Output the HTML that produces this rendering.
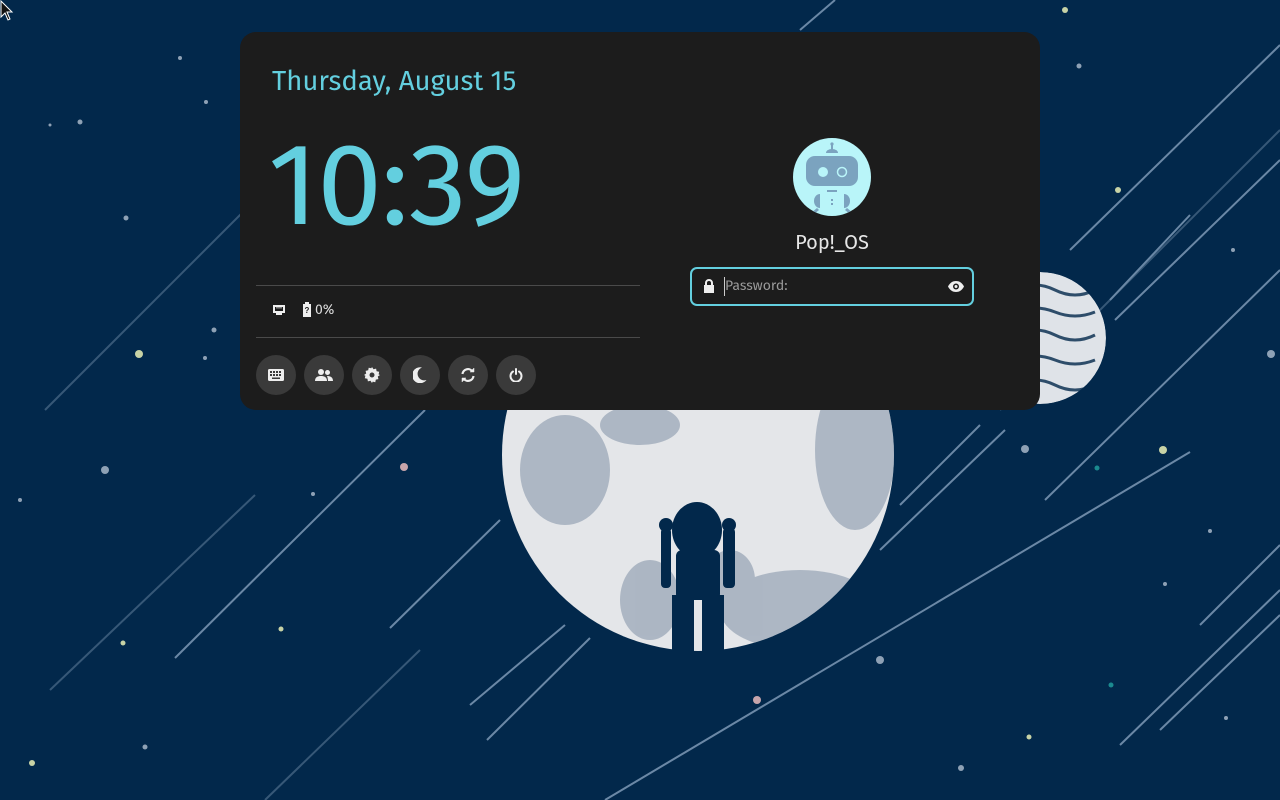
<!DOCTYPE html>
<html><head><meta charset="utf-8"><style>
html,body{margin:0;padding:0;width:1280px;height:800px;overflow:hidden;background:#02284b;font-family:"Fira Sans","Liberation Sans",sans-serif}
#bg{position:absolute;left:0;top:0}
.card{position:absolute;left:240px;top:32px;width:800px;height:378px;background:#1c1c1c;border-radius:16px}
.date{position:absolute;left:32px;top:33px;font-size:27.5px;color:#63cfdf}
.time{position:absolute;left:28px;top:96px;font-size:116px;color:#63cfdf;letter-spacing:-1px;line-height:1}
.hr{position:absolute;left:16px;width:384px;height:1px;background:#4a4a4a}
.status{position:absolute;left:32px;top:269px;color:#ddd;font-size:14px;display:flex;align-items:center}
.btns{position:absolute;left:16px;top:323px;display:flex;gap:8px}
.b{width:40px;height:40px;border-radius:20px;background:#3a3a3a;display:flex;align-items:center;justify-content:center}
.av{position:absolute;left:553px;top:106px;width:78px;height:78px;border-radius:50%;background:#b9f5f9;overflow:hidden}
.name{position:absolute;left:492px;top:199px;width:200px;text-align:center;color:#e6e6e6;font-size:20px}
.pw{position:absolute;left:450px;top:235px;width:280px;height:35px;border:2px solid #63cfdf;border-radius:7px;background:#1c1c1c}
.pw span{position:absolute;left:33px;top:8px;font-size:14px;color:#9a9a9a}
.caret{position:absolute;left:32px;top:8px;width:1px;height:19px;background:#ccc}
</style></head><body>
<svg id="bg" width="1280" height="800">
<defs><clipPath id="mc"><rect x="0" y="0" width="1280" height="651"/></clipPath>
<clipPath id="mcc"><circle cx="698" cy="455" r="196"/></clipPath>
<clipPath id="pc"><circle cx="1040" cy="338" r="66"/></clipPath></defs>
<g stroke="#8fa9c4" stroke-width="2" opacity=".75">
<line x1="800" y1="30" x2="835" y2="0"/><line x1="1000" y1="410" x2="1280" y2="130" opacity=".5"/>
<line x1="1070" y1="250" x2="1280" y2="45"/><line x1="1110" y1="300" x2="1190" y2="215"/><line x1="1115" y1="320" x2="1280" y2="160"/>
<line x1="900" y1="505" x2="980" y2="425"/><line x1="880" y1="550" x2="1005" y2="430"/><line x1="1045" y1="500" x2="1280" y2="270"/>
<line x1="605" y1="800" x2="1190" y2="452"/><line x1="1120" y1="745" x2="1280" y2="590"/><line x1="1160" y1="730" x2="1280" y2="615"/>
<line x1="1200" y1="625" x2="1280" y2="545"/><line x1="390" y1="628" x2="500" y2="520"/><line x1="175" y1="658" x2="425" y2="410"/>
<line x1="470" y1="705" x2="565" y2="625"/><line x1="487" y1="740" x2="590" y2="638"/>
<line x1="265" y1="800" x2="420" y2="650" opacity=".5"/><line x1="45" y1="410" x2="255" y2="200" opacity=".5"/>
<line x1="50" y1="690" x2="255" y2="495" opacity=".5"/>
</g>
<g clip-path="url(#pc)"><circle cx="1040" cy="338" r="66" fill="#dfe3e8"/>
<g stroke="#02284b" stroke-width="3" fill="none" opacity=".8"><path d="M975 270q20 8 40 0t40 0t40 0"/><path d="M975 290q20 10 40 0t40 0t40 0"/><path d="M975 312q20 8 40 0t40 0t40 0"/><path d="M975 335q20 10 40 0t40 0t40 0"/><path d="M975 360q20 8 40 0t40 0t40 0"/><path d="M975 385q20 10 40 0t40 0t40 0"/></g></g>
<g clip-path="url(#mc)">
<circle cx="698" cy="455" r="196" fill="#e4e6e9"/>
<g fill="#6a7e97" opacity=".45" clip-path="url(#mcc)">
<ellipse cx="565" cy="470" rx="45" ry="55"/><ellipse cx="640" cy="425" rx="40" ry="20"/><ellipse cx="855" cy="450" rx="40" ry="80"/>
<ellipse cx="800" cy="610" rx="80" ry="40"/><ellipse cx="650" cy="600" rx="30" ry="40"/><ellipse cx="730" cy="580" rx="25" ry="30"/>
</g>
<g fill="#02284b">
<ellipse cx="697" cy="530" rx="25" ry="28"/><circle cx="666" cy="525" r="7"/><circle cx="729" cy="525" r="7"/>
<rect x="661" y="528" width="10" height="60" rx="4"/><rect x="723" y="528" width="12" height="60" rx="4"/>
<rect x="676" y="550" width="44" height="50" rx="6"/><rect x="672" y="595" width="22" height="60"/><rect x="702" y="595" width="22" height="60"/>
</g></g>
<g fill="#8ea1b5">
<circle cx="105" cy="470" r="4"/><circle cx="404" cy="467" r="4" fill="#c7a5ab"/><circle cx="1025" cy="449" r="4"/><circle cx="1163" cy="450" r="4" fill="#c8d3a6"/>
<circle cx="880" cy="660" r="4"/><circle cx="757" cy="700" r="4" fill="#c7a5ab"/><circle cx="139" cy="354" r="4" fill="#c8d3a6"/><circle cx="1271" cy="354" r="4"/>
<circle cx="961" cy="768" r="3"/><circle cx="32" cy="763" r="3" fill="#c8d3a6"/><circle cx="1065" cy="10" r="3" fill="#c8d3a6"/><circle cx="1118" cy="190" r="3" fill="#c8d3a6"/>
<circle cx="80" cy="122" r="2.5"/><circle cx="126" cy="218" r="2.5"/><circle cx="214" cy="330" r="2.5"/><circle cx="313" cy="494" r="2"/>
<circle cx="281" cy="629" r="2.5" fill="#c8d3a6"/><circle cx="123" cy="643" r="2.5" fill="#c8d3a6"/><circle cx="145" cy="747" r="2.5"/><circle cx="1226" cy="718" r="2"/>
<circle cx="1210" cy="531" r="2"/><circle cx="1079" cy="66" r="2.5"/><circle cx="1029" cy="737" r="2.5" fill="#c8d3a6"/><circle cx="1111" cy="685" r="2.5" fill="#1b8a8f"/>
<circle cx="1097" cy="468" r="2.5" fill="#1b8a8f"/><circle cx="20" cy="500" r="2"/><circle cx="206" cy="102" r="2"/><circle cx="180" cy="58" r="2"/>
<circle cx="50" cy="125" r="1.5"/><circle cx="1233" cy="250" r="2"/><circle cx="1165" cy="584" r="2"/><circle cx="205" cy="358" r="2"/>
</g>
<path d="M1 1 L1 17 L5 13 L8 20 L10 19 L7 12 L12 12 Z" fill="#111" stroke="#fff" stroke-width="1"/>
</svg>
<div class="card">
<div class="date">Thursday, August 15</div>
<div class="time">10:39</div>
<div class="hr" style="top:253px"></div>
<div class="status">
<svg width="14" height="12" viewBox="0 0 14 12"><path d="M1 1h12v8h-3v2H4V9H1z" fill="#eee"/><path d="M3 3h8v4H3z" fill="#1c1c1c"/><path d="M5 3v1.5M7 3v1.5M9 3v1.5" stroke="#eee" stroke-width="1"/></svg>
<svg width="10" height="15" viewBox="0 0 10 15" style="margin-left:16px"><path d="M3 0h4v2h2v13H1V2h2z" fill="#eee"/><text x="5" y="11" font-size="8" text-anchor="middle" fill="#1c1c1c" font-family="Liberation Sans" font-weight="bold">?</text></svg>
<span style="margin-left:3px">0%</span></div>
<div class="hr" style="top:305px"></div>
<div class="btns">
<div class="b"><svg width="16" height="12" viewBox="0 0 16 12"><rect x="0" y="0" width="16" height="12" rx="1.5" fill="#eee"/><g fill="#3a3a3a"><rect x="2" y="2" width="2" height="2"/><rect x="5" y="2" width="2" height="2"/><rect x="8" y="2" width="2" height="2"/><rect x="11" y="2" width="2" height="2"/><rect x="2" y="5" width="2" height="2"/><rect x="5" y="5" width="2" height="2"/><rect x="8" y="5" width="2" height="2"/><rect x="11" y="5" width="2" height="2"/><rect x="4" y="8.5" width="8" height="1.5"/></g></svg></div>
<div class="b"><svg width="18" height="14" viewBox="0 0 18 14"><circle cx="6" cy="4" r="3" fill="#eee"/><path d="M0 13c0-4 3-5 6-5s6 1 6 5z" fill="#eee"/><circle cx="12.5" cy="4.5" r="2.5" fill="#eee"/><path d="M12 8c3 0 6 1 6 5h-5c0-2-0.5-3.5-1-5z" fill="#eee"/></svg></div>
<div class="b"><svg width="16" height="16" viewBox="0 0 16 16"><path d="M8 0l1.5 2.2 2.6-.6.5 2.6 2.6.6-.6 2.6L16 8l-2.2 1.5.6 2.6-2.6.5-.5 2.6-2.6-.6L8 16l-1.5-2.2-2.6.6-.5-2.6-2.6-.5.6-2.6L0 8l2.2-1.5-.6-2.6 2.6-.6.5-2.6 2.6.6z" fill="#eee"/><circle cx="8" cy="8" r="2.5" fill="#3a3a3a"/></svg></div>
<div class="b"><svg width="14" height="16" viewBox="0 0 14 16"><path d="M9 0.5A8 8 0 1 0 13.5 13 6.5 6.5 0 0 1 9 0.5z" fill="#eee"/></svg></div>
<div class="b"><svg width="16" height="16" viewBox="0 0 16 16" fill="none" stroke="#eee" stroke-width="2.2"><path d="M2.5 7A5.5 5.5 0 0 1 12.5 4.5"/><path d="M13.5 9A5.5 5.5 0 0 1 3.5 11.5"/><path d="M14 1v4h-4z M2 15v-4h4z" fill="#eee" stroke-width="0.5"/></svg></div>
<div class="b"><svg width="14" height="14" viewBox="0 0 14 14" fill="none" stroke="#eee" stroke-width="2" stroke-linecap="round"><path d="M4 3.5A5.5 5.5 0 1 0 10 3.5"/><path d="M7 1v5"/></svg></div>
</div>
<div class="av"><svg width="78" height="78" viewBox="0 0 78 78"><g fill="#7ba3bf"><rect x="38" y="6" width="2" height="6"/><circle cx="39" cy="6" r="1.6"/><path d="M33 15a6 4 0 0 1 12 0z"/><rect x="13" y="18" width="52" height="30" rx="9"/><rect x="34" y="52" width="10" height="2"/><path d="M27 56a6 7 0 0 0 0 14z"/><path d="M51 56a6 7 0 0 1 0 14z"/><path d="M18 75l6-5 2 2-6 5z M60 75l-6-5-2 2 6 5z"/><rect x="38" y="61" width="2" height="2"/><rect x="38" y="65" width="2" height="2"/></g><circle cx="30" cy="34" r="5" fill="#b9f5f9"/><circle cx="49" cy="34" r="4.5" fill="none" stroke="#b9f5f9" stroke-width="1.5"/></svg></div>
<div class="name">Pop!_OS</div>
<div class="pw">
<svg style="position:absolute;left:11px;top:10px" width="12" height="14" viewBox="0 0 12 14"><path d="M3 6V4a3 3 0 0 1 6 0v2" stroke="#eee" stroke-width="2" fill="none"/><rect x="1" y="6" width="10" height="8" fill="#eee"/></svg>
<div class="caret"></div><span>Password:</span>
<svg style="position:absolute;left:256px;top:12px" width="16" height="11" viewBox="0 0 16 11"><path d="M0 5.5C2 1.5 5 0 8 0s6 1.5 8 5.5C14 9.5 11 11 8 11S2 9.5 0 5.5z" fill="#eee"/><circle cx="8" cy="5.5" r="3" fill="#1c1c1c"/><circle cx="8" cy="5.5" r="1.5" fill="#eee"/></svg>
</div>
</div>
</body></html>
